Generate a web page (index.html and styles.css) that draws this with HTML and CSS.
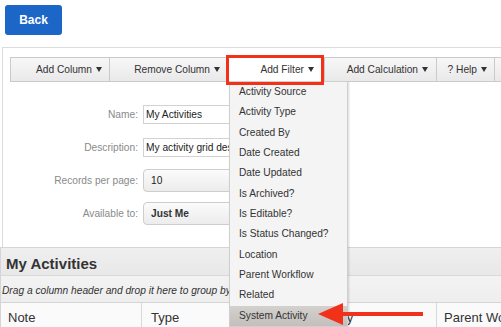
FILE: index.html
```html
<!DOCTYPE html>
<html lang="en">
<head>
    <meta charset="UTF-8">
    <title>My Activities</title>
    <link rel="stylesheet" href="styles.css">
</head>
<body>

<div class="page">
    <div class="top">
        <button class="back-button">Back</button>
    </div>

    <div class="panel">
        <!-- Toolbar -->
        <div class="toolbar">
            <div class="tool tool-col">Add Column<span class="caret"></span></div>
            <div class="tool tool-remove">Remove Column<span class="caret"></span></div>
            <div class="tool tool-filter marked">Add Filter<span class="caret"></span>
                <ul class="menu">
                    <li>Activity Source</li>
                    <li>Activity Type</li>
                    <li>Created By</li>
                    <li>Date Created</li>
                    <li>Date Updated</li>
                    <li>Is Archived?</li>
                    <li>Is Editable?</li>
                    <li>Is Status Changed?</li>
                    <li>Location</li>
                    <li>Parent Workflow</li>
                    <li>Related</li>
                    <li class="hover">System Activity</li>
                </ul>
            </div>
            <div class="tool tool-calc">Add Calculation<span class="caret"></span></div>
            <div class="tool tool-help">? Help<span class="caret"></span></div>
            <div class="tool tool-rest"></div>
        </div>

        <!-- Grid settings -->
        <form class="settings">
            <div class="form-row">
                <label>Name:</label>
                <input type="text" class="field" value="My Activities">
            </div>
            <div class="form-row">
                <label>Description:</label>
                <input type="text" class="field" value="My activity grid description">
            </div>
            <div class="form-row">
                <label>Records per page:</label>
                <select class="picker"><option>10</option></select>
            </div>
            <div class="form-row">
                <label>Available to:</label>
                <select class="picker picker-strong"><option>Just Me</option></select>
            </div>
        </form>
    </div>

    <div class="grid">
        <h2 class="grid-title">My Activities</h2>
        <div class="group-bar">Drag a column header and drop it here to group by that column</div>
        <div class="grid-head">
            <div class="col col-note">Note</div>
            <div class="col col-type">Type</div>
            <div class="col col-activity">Activity</div>
            <div class="col col-parent">Parent Workflow</div>
        </div>
    </div>

    <svg class="pointer" width="110" height="24" viewBox="0 0 110 24">
        <polygon points="2,12 27,1 27,23" fill="#f2311a"/>
        <rect x="25" y="10" width="82" height="4" fill="#f2311a"/>
    </svg>
</div>

</body>
</html>
```

FILE: styles.css
```css
body {
    margin: 0;
    font-family: "Liberation Sans", Arial, sans-serif;
    font-size: 10.2px;
    color: #333;
    background: #fff;
}
.page {
    position: relative;
    width: 501px;
    height: 327px;
    overflow: hidden;
}
.top {
    height: 47px;
    padding: 5px 0 0 5px;
    box-sizing: border-box;
}
.back-button {
    display: block;
    width: 57px;
    height: 30px;
    border: none;
    border-radius: 3px;
    background: #1b66c7;
    color: #fff;
    font-family: "Liberation Sans", Arial, sans-serif;
    font-size: 12px;
    font-weight: bold;
    padding: 0;
}
.panel {
    margin-left: 2px;
    border-top: 1px solid #dcdcdc;
    border-left: 1px solid #dcdcdc;
    padding: 9px 0 17px 7px;
}
.toolbar {
    display: flex;
    height: 25px;
    box-sizing: border-box;
    border: 1px solid #cacaca;
    border-right: none;
    background: linear-gradient(#f7f7f7, #e9e9e9);
}
.tool {
    position: relative;
    flex-shrink: 0;
    box-sizing: border-box;
    height: 23px;
    line-height: 23px;
    text-align: right;
    padding-right: 7px;
    border-right: 1px solid #cacaca;
    white-space: nowrap;
}
.tool-col { width: 99px; }
.tool-remove { width: 118px; }
.tool-filter { width: 97px; padding-right: 10px; }
.tool-calc { width: 112px; padding-right: 8px; }
.tool-help { width: 58px; }
.tool-rest { flex: 1; border-right: none; }
.caret {
    display: inline-block;
    width: 0;
    height: 0;
    margin-left: 4px;
    vertical-align: 1px;
    border-left: 3.5px solid transparent;
    border-right: 3.5px solid transparent;
    border-top: 5px solid #333;
}
.tool.marked {
    background: #fff;
}
.tool.marked::after {
    content: "";
    position: absolute;
    top: -3px;
    left: -2px;
    right: 0;
    bottom: -4px;
    border: 3px solid #f2311a;
    z-index: 3;
}
.menu {
    position: absolute;
    top: 23px;
    left: 1px;
    width: 117px;
    margin: 0;
    padding: 0;
    list-style: none;
    background: #f4f4f4;
    border: 1px solid #cfcfcf;
    box-shadow: 1px 1px 2px rgba(0, 0, 0, 0.15);
    text-align: left;
    z-index: 2;
}
.menu li {
    height: 20.33px;
    line-height: 20px;
    padding-left: 9px;
}
.menu li.hover {
    background: linear-gradient(#d3d0ce, #c2bfbc);
}
.settings {
    padding-top: 16px;
    margin-left: -7px;
}
.form-row {
    display: flex;
    align-items: center;
    height: 33px;
}
.form-row label {
    width: 135px;
    text-align: right;
    color: #8a8a8a;
    margin-right: 5px;
}
.field {
    width: 180px;
    height: 19px;
    box-sizing: border-box;
    border: 1px solid #d2d2d2;
    padding: 0 2px;
    font-family: "Liberation Sans", Arial, sans-serif;
    font-size: 10.2px;
    color: #222;
}
.picker {
    -webkit-appearance: none;
    appearance: none;
    width: 180px;
    height: 23px;
    border: 1px solid #cdcdcd;
    border-radius: 4px;
    background: linear-gradient(#fbfbfb, #ececec);
    padding: 0 0 0 7px;
    font-family: "Liberation Sans", Arial, sans-serif;
    font-size: 10.2px;
    color: #222;
}
.picker-strong {
    font-weight: bold;
    color: #333;
}
.grid {
    border-left: 1px solid #d5d5d5;
}
.grid-title {
    margin: 0;
    height: 27px;
    line-height: 32px;
    padding-left: 5px;
    font-size: 15px;
    font-weight: bold;
    color: #333;
    border-top: 1px solid #d5d5d5;
    border-bottom: 1px solid #d8d8d8;
    background: linear-gradient(#efefef, #e8e8e8);
    overflow: hidden;
}
.group-bar {
    height: 26px;
    line-height: 30px;
    padding-left: 1px;
    font-style: italic;
    white-space: nowrap;
    overflow: hidden;
    background: linear-gradient(#f3f3f3, #eeeeee);
    border-bottom: 1px solid #d5d5d5;
}
.grid-head {
    display: flex;
    height: 26px;
    overflow: hidden;
    background: #fafafa;
    font-size: 13px;
}
.col {
    flex-shrink: 0;
    box-sizing: border-box;
    line-height: 30px;
    padding-left: 7px;
    border-right: 1px solid #d8d8d8;
    white-space: nowrap;
}
.col-note { width: 141px; }
.col-type { width: 148px; padding-left: 9px; }
.col-activity { width: 147px; padding-left: 22px; }
.col-parent { width: 120px; border-right: none; }
.pointer {
    position: absolute;
    left: 316px;
    top: 302px;
    z-index: 4;
}
```
